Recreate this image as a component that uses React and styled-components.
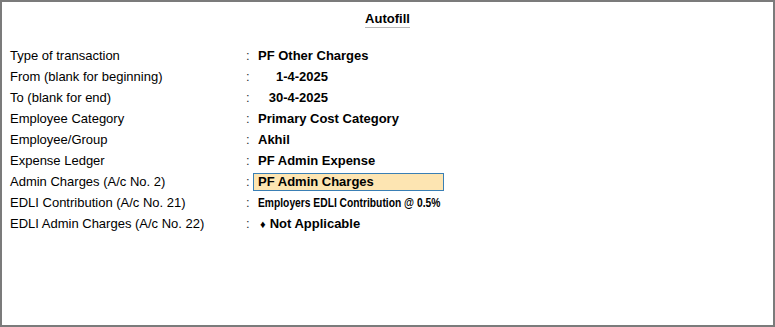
import React from 'react';
import styled, { createGlobalStyle } from 'styled-components';

const GlobalStyle = createGlobalStyle`
  html, body {
    margin: 0;
    padding: 0;
    background: #ffffff;
  }
  body {
    font-family: "Liberation Sans", Arial, sans-serif;
    color: #000000;
  }
`;

const rows = [
  { label: 'Type of transaction', value: 'PF Other Charges' },
  { label: 'From (blank for beginning)', value: '1-4-2025', kind: 'date' },
  { label: 'To (blank for end)', value: '30-4-2025', kind: 'date' },
  { label: 'Employee Category', value: 'Primary Cost Category' },
  { label: 'Employee/Group', value: 'Akhil' },
  { label: 'Expense Ledger', value: 'PF Admin Expense' },
  { label: 'Admin Charges (A/c No. 2)', value: 'PF Admin Charges', kind: 'active' },
  { label: 'EDLI Contribution (A/c No. 21)', value: 'Employers EDLI Contribution @ 0.5%', kind: 'narrow' },
  { label: 'EDLI Admin Charges (A/c No. 22)', value: 'Not Applicable', kind: 'special' },
];

const App = () => {
  return (
    <>
      <GlobalStyle />
      <Panel>
        <Title>Autofill</Title>
        <Form>
          {rows.map((row) => (
            <Row key={row.label}>
              <Label>{row.label}</Label>
              <Colon>:</Colon>
              {row.kind === 'active' ? (
                <ActiveField>{row.value}</ActiveField>
              ) : row.kind === 'date' ? (
                <DateValue>{row.value}</DateValue>
              ) : row.kind === 'narrow' ? (
                <Value>
                  <Condensed>{row.value}</Condensed>
                </Value>
              ) : row.kind === 'special' ? (
                <Value>
                  <Diamond>♦</Diamond>
                  {row.value}
                </Value>
              ) : (
                <Value>{row.value}</Value>
              )}
            </Row>
          ))}
        </Form>
      </Panel>
    </>
  );
};

export default App;

const Panel = styled.div`
  box-sizing: border-box;
  width: 775px;
  height: 327px;
  border: 2px solid #7b7b7b;
  background: #ffffff;
  display: flex;
  flex-direction: column;
`;

const Title = styled.div`
  align-self: center;
  margin-top: 9px;
  font-size: 13px;
  font-weight: bold;
  line-height: 15px;
  padding-bottom: 1px;
  border-bottom: 1px solid #b8b8b8;
  color: #000000;
`;

const Form = styled.div`
  display: flex;
  flex-direction: column;
  margin-top: 17px;
  padding-left: 8px;
`;

const Row = styled.div`
  display: flex;
  align-items: center;
  height: 21px;
`;

const Label = styled.div`
  width: 236px;
  font-size: 13px;
`;

const Colon = styled.div`
  width: 11px;
  font-size: 13px;
  color: #333333;
`;

const Value = styled.div`
  font-size: 13px;
  font-weight: bold;
  padding-left: 1px;
  display: flex;
  align-items: center;
`;

const DateValue = styled(Value)`
  width: 70px;
  justify-content: flex-end;
`;

const Condensed = styled.span`
  display: inline-block;
  font-size: 13px;
  white-space: nowrap;
  transform: scaleX(0.79);
  transform-origin: left center;
`;

const Diamond = styled.span`
  font-size: 11px;
  margin-left: 2px;
  margin-right: 4px;
`;

const ActiveField = styled.div`
  box-sizing: border-box;
  width: 191px;
  height: 18px;
  margin-left: -4px;
  padding-left: 4px;
  background: #fde5b2;
  border: 1px solid #3a7fb5;
  font-size: 13px;
  font-weight: bold;
  display: flex;
  align-items: center;
`;
